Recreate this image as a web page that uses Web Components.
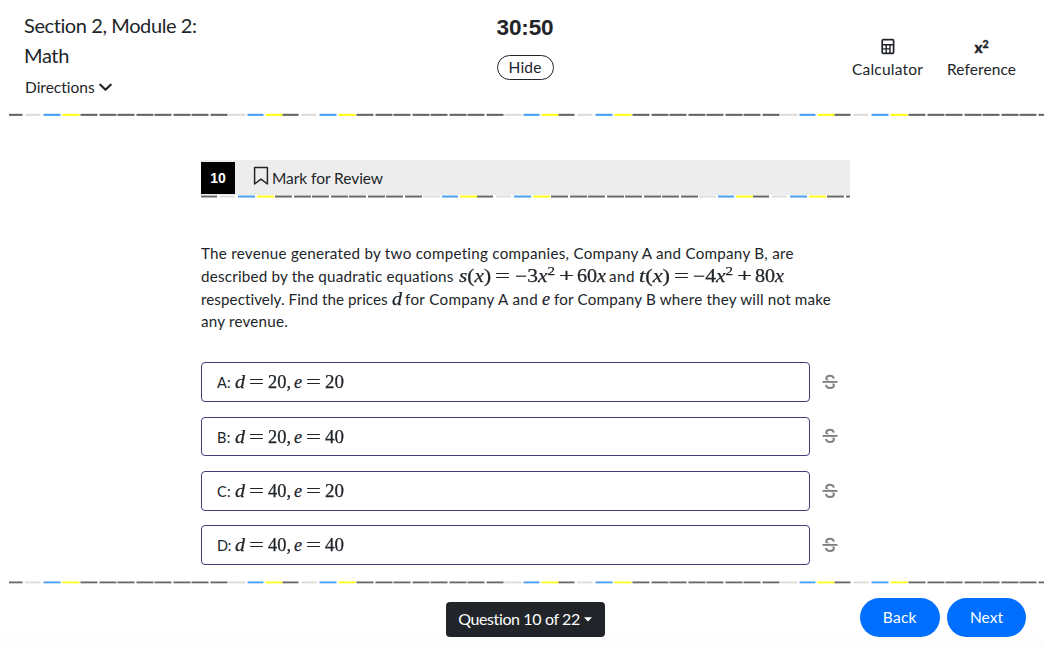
<!DOCTYPE html>
<html lang="en">
<head>
<meta charset="utf-8">
<title>Math module</title>
<style>
html,body{margin:0;height:100%;background:#fff;overflow:hidden}
body{font-family:Lato,"Open Sans",sans-serif;color:#212529}
</style>
</head>
<body>
<exam-page></exam-page>
<script>
const define = (name, html, setup) => {
  const t = document.createElement('template');
  t.innerHTML = html;
  customElements.define(name, class extends HTMLElement {
    connectedCallback() {
      if (this.shadowRoot) return;
      this.attachShadow({mode: 'open'}).append(t.content.cloneNode(true));
      if (setup) setup(this, this.shadowRoot);
    }
  });
};

// Text run set to a given measure: w = width, gap = space before, stretch = scale the glyphs.
define('fit-text', `<style>
:host{display:block;flex:none;white-space:pre}
span{display:inline-block;transform-origin:0 50%}
::slotted(sup){font-size:.7em;line-height:0;vertical-align:.52em}
</style><span><slot></slot></span>`, (el, root) => {
  const s = root.querySelector('span');
  const w = parseFloat(el.getAttribute('w'));
  el.style.width = w + 'px';
  el.style.marginLeft = (el.getAttribute('gap') || 0) + 'px';
  const n = s.getBoundingClientRect().width;
  if (el.hasAttribute('stretch')) s.style.transform = `scaleX(${w / n})`;
  else s.style.letterSpacing = (w - n) / el.textContent.length + 'px';
});

// Decorative strip of coloured dashes, repeating every 276px.
define('dash-strip', `<style>
:host{display:block;height:3px}
div{height:100%}
</style><div></div>`, (el, root) => {
  const K='#666', L='#dcdcdc', B='#45a0f5', Y='#ffff1a';
  const seg = [[0,16,K],[18.7,34.3,L],[37,54,B],[56,73,Y]];
  for (let i = 0; i < 8; i++) seg.push([74.3 + i*18.5, 91.2 + i*18.5, K]);
  seg.push([222.3,239,L],[240.8,257.5,B],[259.3,276,Y]);
  let at = 0; const stops = [];
  for (const [a,b,c] of seg) { stops.push(`transparent ${at}px ${a}px`, `${c} ${a}px ${b}px`); at = b; }
  const d = root.querySelector('div');
  d.style.background = `linear-gradient(90deg,${stops.join(',')}) ${el.getAttribute('shift') || 0}px 0/276px 100% repeat-x`;
  const m = el.getAttribute('rows');
  d.style.maskImage = 'linear-gradient(' + m.split(' ').map((o,i)=>`rgba(0,0,0,${o}) ${i}px ${i+1}px`).join(',') + ')';
});

define('exam-header', `<style>
:host{display:grid;grid-template-columns:1fr 60px 1fr;height:113px;box-sizing:border-box;padding:0 31px 0 24px}
.left{padding-top:11px;font-size:20px;line-height:29.5px}
.dir{display:flex;align-items:center;font-size:15.5px;line-height:20px;padding-top:7px}
.dir svg{margin-left:4px}
.mid{display:flex;flex-direction:column;align-items:center;padding-top:14px}
.time{font:bold 22.5px/27px "Liberation Sans",sans-serif}
button{margin-top:14px;width:57px;height:25px;box-sizing:border-box;border:1px solid #212529;border-radius:13px;background:#fff;padding:0;font:15.5px/23px Lato,sans-serif;color:#212529;display:flex;justify-content:center}
.right{display:flex;justify-content:flex-end;gap:24px;padding:38px 10px 0 0;font-size:15.5px}
.tool{display:flex;flex-direction:column;align-items:center;line-height:20px}
.ico{height:21px;display:flex;align-items:flex-start}
.x{font:900 15px/18px Lato,sans-serif;-webkit-text-stroke:.4px #212529}
.x sup{font-size:10.5px;line-height:0;vertical-align:5px}
</style>
<div class="left"><fit-text w="173">Section 2, Module 2:</fit-text><fit-text w="45">Math</fit-text>
<div class="dir"><fit-text w="70" gap="1">Directions</fit-text><svg width="13" height="9" viewBox="0 0 13 9"><path d="M1.3 1.7 6.5 6.7 11.7 1.7" fill="none" stroke="#212529" stroke-width="2.2" stroke-linecap="round" stroke-linejoin="round"/></svg></div></div>
<div class="mid"><div class="time"><fit-text w="57">30:50</fit-text></div><button><fit-text w="33">Hide</fit-text></button></div>
<div class="right"><div class="tool"><div class="ico"><svg width="14" height="17" viewBox="0 0 14 17"><rect x="1.2" y="1.7" width="11.4" height="13.6" rx="1" fill="none" stroke="#212529" stroke-width="1.7"/><path d="M1 6.8H13M1 10.9H9.2M5.2 7V15M9 7V15" stroke="#212529" stroke-width="1.4"/></svg></div><fit-text w="71">Calculator</fit-text></div>
<div class="tool"><div class="ico x"><span>x<sup>2</sup></span></div><fit-text w="69">Reference</fit-text></div></div>`);

define('review-bar', `<style>
:host{display:block}
.bar{display:flex;align-items:center;height:35px;background:#ededed}
.num{width:34px;height:32px;margin-top:1px;background:#000;color:#fff;font:bold 14px/32px "Liberation Sans",sans-serif;text-align:center}
svg{margin:-3px 3px 0 18px}
fit-text{font-size:15.5px;line-height:20px;margin-top:1px}
</style>
<div class="bar"><div class="num">10</div><svg width="16" height="20" viewBox="0 0 16 20"><path d="M1.6 1.4H14.4V18L8 13.2 1.6 18Z" fill="none" stroke="#212529" stroke-width="1.5" stroke-linejoin="round"/></svg><fit-text w="111">Mark for Review</fit-text></div>
<dash-strip rows=".45 1 .5"></dash-strip>`);

define('question-text', `<style>
:host{display:block;font-size:15.2px;line-height:22.8px}
.line{display:flex;align-items:baseline;height:22.8px}
.m{font-family:"Liberation Serif",serif;font-size:18px;line-height:20px;-webkit-text-stroke:.25px #212529}
</style>
<div class="line"><fit-text w="593">The revenue generated by two competing companies, Company A and Company B, are</fit-text></div>
<div class="line"><fit-text w="253">described by the quadratic equations</fit-text><fit-text class="m" stretch w="32" gap="5"><i>s</i>(<i>x</i>)</fit-text><fit-text class="m" stretch w="15" gap="4">=</fit-text><fit-text class="m" stretch w="40" gap="5">−3<i>x</i><sup>2</sup></fit-text><fit-text class="m" stretch w="15" gap="4">+</fit-text><fit-text class="m" stretch w="29" gap="3">60<i>x</i></fit-text><fit-text w="26" gap="3">and</fit-text><fit-text class="m" stretch w="31" gap="4"><i>t</i>(<i>x</i>)</fit-text><fit-text class="m" stretch w="15" gap="4">=</fit-text><fit-text class="m" stretch w="40" gap="4">−4<i>x</i><sup>2</sup></fit-text><fit-text class="m" stretch w="15" gap="4">+</fit-text><fit-text class="m" stretch w="29" gap="3">80<i>x</i></fit-text></div>
<div class="line"><fit-text w="187">respectively. Find the prices</fit-text><fit-text class="m" stretch w="10" gap="4"><i>d</i></fit-text><fit-text w="133" gap="3">for Company A and</fit-text><fit-text class="m" stretch w="8" gap="4"><i>e</i></fit-text><fit-text w="277" gap="4">for Company B where they will not make</fit-text></div>
<div class="line"><fit-text w="87">any revenue.</fit-text></div>`);

define('answer-choice', `<style>
:host{display:flex;align-items:center;height:39.8px}
.box{width:609px;height:100%;box-sizing:border-box;border:1px solid #443d7c;border-radius:4px;padding-left:15px;display:flex;align-items:baseline;line-height:38px}
.l{font:14.5px/38px Lato,sans-serif}
.m{font-family:"Liberation Serif",serif;font-size:18px;-webkit-text-stroke:.25px #212529}
svg{margin-left:12px}
</style>
<div class="box"><fit-text class="l" w="14"></fit-text><fit-text class="m" stretch w="10" gap="4"><i>d</i></fit-text><fit-text class="m" stretch w="15" gap="4">=</fit-text><fit-text class="m a" stretch w="23" gap="4"></fit-text><fit-text class="m" stretch w="8" gap="3"><i>e</i></fit-text><fit-text class="m" stretch w="15" gap="4">=</fit-text><fit-text class="m b" stretch w="19" gap="4"></fit-text></div>
<svg width="16" height="16" viewBox="0 0 16 16"><path d="M11.8 4.7C11.6 2.7 10.1 1.8 8 1.8 5.8 1.8 4.3 2.8 4.3 4.5 4.3 6.1 5.7 6.8 8 7.6 10.7 8.5 11.9 9.4 11.9 11.1 11.9 12.9 10.4 14 8.1 14 5.7 14 4.2 12.9 4 10.9" fill="none" stroke="#808080" stroke-width="2"/><path d="M.5 7.9H15.5" stroke="#fff" stroke-width="3.4"/><path d="M.5 7.9H15.5" stroke="#808080" stroke-width="1.9"/></svg>`, (el, root) => {
  const put = (q, t) => {
    const o = root.querySelector(q), n = o.cloneNode(false);
    n.textContent = t;
    o.replaceWith(n);
  };
  put('.l', el.getAttribute('letter') + ':');
  put('.a', el.getAttribute('d') + ',');
  put('.b', el.getAttribute('e'));
});

define('exam-footer', `<style>
:host{display:grid;grid-template-columns:1fr 159px 1fr;height:64px;margin-right:13px;padding-left:6px;box-sizing:border-box;background:linear-gradient(#fff 76%,#fcfcfc)}
button{border:0;padding:0;color:#fff;display:flex;justify-content:center;align-items:center;font:16px/20px Lato,sans-serif}
.q{grid-column:2;margin-top:18px;height:35px;background:#212529;border-radius:4px}
.q svg{margin-left:4px}
.nav{display:flex;justify-content:flex-end;gap:7px;padding:14px 18px 0 0}
.nav button{width:79px;height:39px;border-radius:20px;background:#006fff;font-size:15.5px}
.nav button:first-child{width:80.5px}
</style>
<button class="q"><fit-text w="122">Question 10 of 22</fit-text><svg width="8" height="5"><path d="M0 .3H8L4 4.5Z" fill="#fff"/></svg></button>
<div class="nav"><button><fit-text w="34">Back</fit-text></button><button><fit-text w="33">Next</fit-text></button></div>`);

define('exam-page', `<style>
:host{display:block;width:1057px;height:659px}
main{width:648.5px;margin-left:201px;padding-top:44px;height:421px;box-sizing:border-box}
.strip{margin:0 13.5px 0 8.5px}
question-text{margin-top:44px}
.list{display:grid;gap:14.6px;margin-top:29px}
</style>
<exam-header></exam-header>
<dash-strip class="strip" shift="-2.5" rows=".2 1 .9"></dash-strip>
<main><review-bar></review-bar><question-text></question-text>
<div class="list"><answer-choice letter="A" d="20" e="20"></answer-choice><answer-choice letter="B" d="20" e="40"></answer-choice><answer-choice letter="C" d="40" e="20"></answer-choice><answer-choice letter="D" d="40" e="40"></answer-choice></div></main>
<div style="height:43.5px"></div>
<dash-strip class="strip" shift="-2.5" rows=".5 1 .3"></dash-strip>
<exam-footer></exam-footer>`);
</script>
</body>
</html>
